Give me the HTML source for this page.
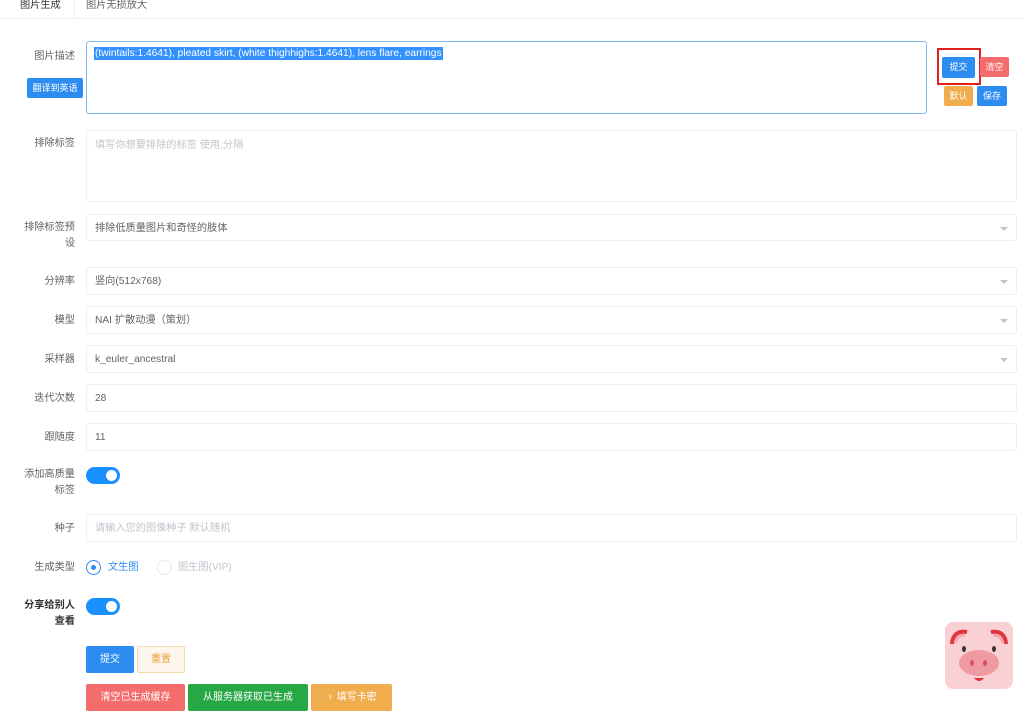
<!DOCTYPE html><html><head><meta charset="utf-8"><style>
*{box-sizing:border-box;margin:0;padding:0}
body{width:1024px;height:700px;overflow:hidden;background:#fff;font-family:"Liberation Sans","Noto Sans CJK SC",sans-serif;font-size:10.2px;color:#606266;position:relative}
.a{position:absolute}
.lbl{position:absolute;right:949px;text-align:right;font-size:10.2px;color:#606266;line-height:16px}
.inp{position:absolute;left:86px;width:931px;border:1px solid #ebeef5;border-radius:3px;height:28px;line-height:28px;padding-left:8px;font-size:10.2px;color:#606266}
.arr{position:absolute;right:8px;top:12px;width:0;height:0;border-left:4px solid transparent;border-right:4px solid transparent;border-top:4px solid #c0c4cc}
.btn{position:absolute;color:#fff;font-size:9px;text-align:center;border-radius:2px}
.sw{position:absolute;left:86px;width:34px;height:17px;border-radius:9px;background:#1890ff}
.sw:after{content:"";position:absolute;right:3px;top:3px;width:11px;height:11px;border-radius:50%;background:#fff}
</style></head><body>
<div class="a" style="left:5px;top:0;width:70px;height:19px;border-right:1px solid #eee;background:#fff"></div>
<div class="a" style="left:0;top:18px;width:1024px;height:1px;background:#eee"></div>
<div class="a" style="left:20px;top:-4px;color:#303133">图片生成</div>
<div class="a" style="left:86px;top:-4px;color:#606266">图片无损放大</div>

<div class="lbl" style="top:49px">图片描述</div>
<div class="btn" style="left:27px;top:78px;width:56px;height:20px;line-height:20px;background:#2d8cf0">翻译到英语</div>
<div class="a" style="left:86px;top:41px;width:841px;height:73px;border:1px solid #7fb8ec;border-radius:3px"></div>
<div class="a" style="left:94px;top:47px;background:#3390ff;color:#fff;line-height:13px;padding:0 1px">(twintails:1.4641), pleated skirt, (white thighhighs:1.4641), lens flare, earrings</div>
<div class="a" style="left:937px;top:48px;width:44px;height:37px;border:2px solid #e02020"></div>
<div class="btn" style="left:942px;top:57px;width:33px;height:21px;line-height:21px;background:#2d8cf0">提交</div>
<div class="btn" style="left:980px;top:57px;width:29px;height:20px;line-height:20px;background:#f56c6c">清空</div>
<div class="btn" style="left:944px;top:86px;width:29px;height:20px;line-height:20px;background:#f0ad4e">默认</div>
<div class="btn" style="left:977px;top:86px;width:30px;height:20px;line-height:20px;background:#2d8cf0">保存</div>

<div class="lbl" style="top:136px">排除标签</div>
<div class="a" style="left:86px;top:130px;width:931px;height:72px;border:1px solid #ebeef5;border-radius:3px;padding:5px 8px;color:#c0c4cc">填写你想要排除的标签 使用,分隔</div>

<div class="lbl" style="top:220px;width:56px">排除标签预<br>设</div>
<div class="inp" style="top:214px;height:27px">排除低质量图片和奇怪的肢体<span class="arr"></span></div>
<div class="lbl" style="top:274px">分辨率</div>
<div class="inp" style="top:267px">竖向(512x768)<span class="arr"></span></div>
<div class="lbl" style="top:313px">模型</div>
<div class="inp" style="top:306px">NAI 扩散动漫（策划）<span class="arr"></span></div>
<div class="lbl" style="top:352px">采样器</div>
<div class="inp" style="top:345px">k_euler_ancestral<span class="arr"></span></div>
<div class="lbl" style="top:391px">迭代次数</div>
<div class="inp" style="top:384px">28</div>
<div class="lbl" style="top:430px">跟随度</div>
<div class="inp" style="top:423px">11</div>

<div class="lbl" style="top:467px;width:60px">添加高质量<br>标签</div>
<div class="sw" style="top:467px"></div>
<div class="lbl" style="top:521px">种子</div>
<div class="inp" style="top:514px;color:#c0c4cc">请输入您的图像种子 默认随机</div>
<div class="lbl" style="top:560px">生成类型</div>
<div class="a" style="left:86px;top:560px;width:15px;height:15px;border-radius:50%;border:1px solid #2d8cf0"><div class="a" style="left:4px;top:4px;width:5px;height:5px;border-radius:50%;background:#2d8cf0"></div></div>
<div class="a" style="left:108px;top:560px;color:#2d8cf0;line-height:16px">文生图</div>
<div class="a" style="left:157px;top:560px;width:15px;height:15px;border-radius:50%;border:1px solid #e4e7ed"></div>
<div class="a" style="left:178px;top:560px;color:#c0c4cc;line-height:16px">图生图(VIP)</div>
<div class="lbl" style="top:598px;width:60px;font-weight:bold;color:#303133">分享给别人<br>查看</div>
<div class="sw" style="top:598px"></div>

<div class="btn" style="left:86px;top:646px;width:48px;height:27px;line-height:27px;background:#2d8cf0;font-size:10px">提交</div>
<div class="btn" style="left:137px;top:646px;width:48px;height:27px;line-height:25px;background:#fdf6ec;border:1px solid #f5dab1;color:#e6a23c;font-size:10px">重置</div>
<div class="btn" style="left:86px;top:684px;width:99px;height:27px;line-height:27px;background:#f56c6c;font-size:10px">清空已生成缓存</div>
<div class="btn" style="left:188px;top:684px;width:120px;height:27px;line-height:27px;background:#28a745;font-size:10px">从服务器获取已生成</div>
<div class="btn" style="left:311px;top:684px;width:81px;height:27px;line-height:27px;background:#f0ad4e;font-size:10px">♀ 填写卡密</div>

<svg class="a" style="left:945px;top:622px" width="68" height="67" viewBox="0 0 68 67">
<rect x="0" y="0" width="68" height="67" rx="8" fill="#f9d0d3"/>
<path d="M7 22 Q8 8 22 10" stroke="#e0343d" stroke-width="4" fill="none"/>
<path d="M10 21 Q12 13 20 13" stroke="#f4a6ae" stroke-width="3" fill="none"/>
<path d="M61 22 Q60 8 46 10" stroke="#e0343d" stroke-width="4" fill="none"/>
<path d="M58 21 Q56 13 48 13" stroke="#f4a6ae" stroke-width="3" fill="none"/>
<ellipse cx="19" cy="27" rx="2" ry="3" fill="#333"/>
<ellipse cx="49" cy="27" rx="2" ry="3" fill="#333"/>
<ellipse cx="34" cy="41" rx="20" ry="13" fill="#ef9aa2"/>
<ellipse cx="27" cy="41" rx="2" ry="3" fill="#d9505c"/>
<ellipse cx="40" cy="41" rx="2" ry="3" fill="#d9505c"/>
<path d="M29 56 Q34 62 39 56 Z" fill="#e0343d"/>
</svg>
</body></html>
